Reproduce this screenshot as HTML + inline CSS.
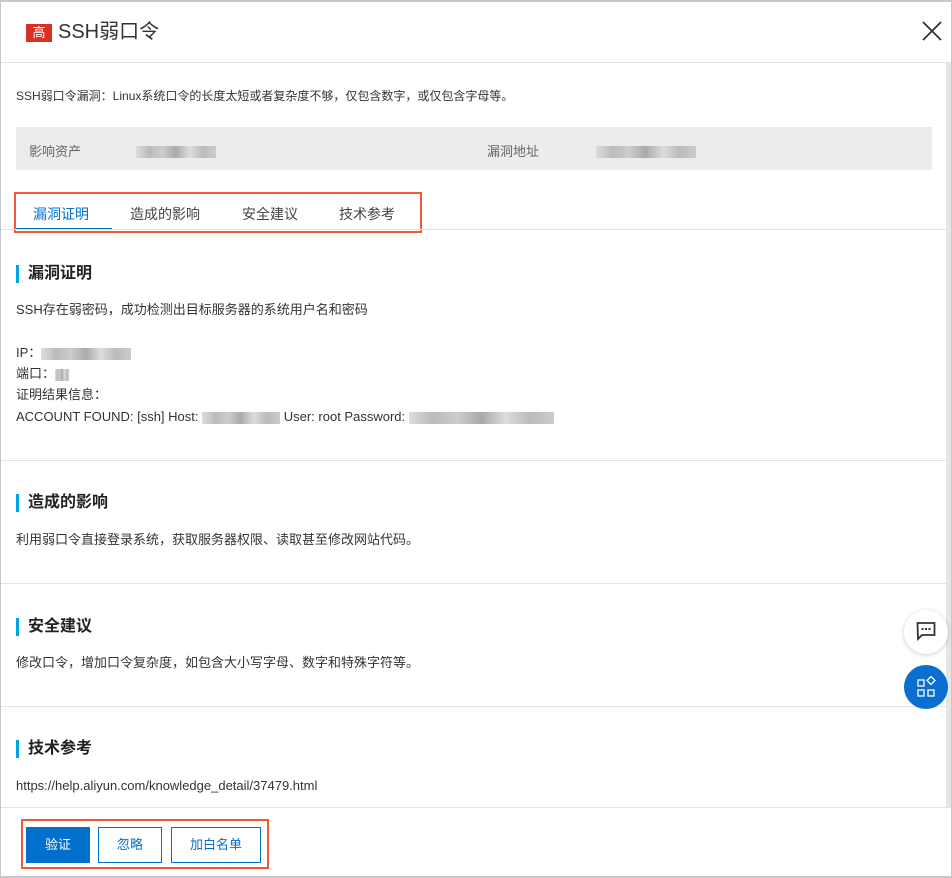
<!DOCTYPE html>
<html><head><meta charset="utf-8"><style>
*{box-sizing:border-box;margin:0;padding:0}
body{width:952px;height:878px;overflow:hidden;background:#fff;font-family:"Liberation Sans","Noto Sans CJK SC",sans-serif;color:#333;position:relative}
.frame{position:absolute;left:0;top:0;width:952px;height:878px;border:1px solid #c8c8c8;border-top:2px solid #c8c8c8;border-bottom:2px solid #c8c8c8}
.abs{position:absolute}
.sb{position:absolute;left:946px;top:62px;width:5px;height:746px;background:#e6e6e6}
.hr{position:absolute;left:1px;width:946px;height:1px;background:#e3e3e3}
.h{position:absolute;left:16px;font-size:16px;font-weight:bold;color:#222;border-left:3px solid #00a2e8;padding-left:9px;line-height:18px}
.t{position:absolute;left:16px;font-size:13px;color:#333;line-height:16px}
.blur{display:inline-block;height:12px;background:linear-gradient(90deg,#ddd,#bbb,#ccc,#aaa,#ddd,#bbb,#ccc);vertical-align:middle}
.btn{position:absolute;top:827px;height:36px;font-size:13px;line-height:34px;text-align:center;border:1px solid #0070cc;color:#0070cc;background:#fff}
</style></head><body>
<div class="frame"></div>
<div class="abs" style="left:26px;top:24px;width:26px;height:18px;background:#d93026;color:#fff;font-size:13px;line-height:18px;text-align:center">高</div>
<div class="abs" style="left:58px;top:18px;font-size:20px;color:#333;line-height:28px">SSH弱口令</div>
<svg class="abs" style="left:921px;top:20px" width="22" height="22"><path d="M2 2L20 20M20 2L2 20" stroke="#333" stroke-width="1.8"/></svg>
<div class="hr" style="top:62px"></div>
<div class="sb"></div>
<div class="t" style="top:88px;font-size:12px">SSH弱口令漏洞：Linux系统口令的长度太短或者复杂度不够，仅包含数字，或仅包含字母等。</div>
<div class="abs" style="left:16px;top:127px;width:916px;height:43px;background:#ebeced"></div>
<div class="abs" style="left:29px;top:141px;font-size:13px;color:#666">影响资产</div>
<div class="abs" style="left:136px;top:143px"><span class="blur" style="width:80px"></span></div>
<div class="abs" style="left:487px;top:141px;font-size:13px;color:#666">漏洞地址</div>
<div class="abs" style="left:596px;top:143px"><span class="blur" style="width:100px"></span></div>
<div class="abs" style="left:14px;top:192px;width:408px;height:41px;border:2px solid #f05a3a"></div>
<div class="abs" style="left:33px;top:204px;font-size:14px;color:#0070cc">漏洞证明</div>
<div class="abs" style="left:16px;top:228px;width:96px;height:2px;background:#0070cc"></div>
<div class="abs" style="left:130px;top:204px;font-size:14px;color:#444">造成的影响</div>
<div class="abs" style="left:242px;top:204px;font-size:14px;color:#444">安全建议</div>
<div class="abs" style="left:339px;top:204px;font-size:14px;color:#444">技术参考</div>
<div class="hr" style="top:229px"></div>
<div class="h" style="top:265px">漏洞证明</div>
<div class="t" style="top:302px">SSH存在弱密码，成功检测出目标服务器的系统用户名和密码</div>
<div class="t" style="top:345px">IP：<span class="blur" style="width:90px"></span></div>
<div class="t" style="top:366px">端口：<span class="blur" style="width:14px"></span></div>
<div class="t" style="top:387px">证明结果信息：</div>
<div class="t" style="top:409px">ACCOUNT FOUND: [ssh] Host: <span class="blur" style="width:78px"></span> User: root Password: <span class="blur" style="width:145px"></span></div>
<div class="hr" style="top:460px"></div>
<div class="h" style="top:494px">造成的影响</div>
<div class="t" style="top:532px">利用弱口令直接登录系统，获取服务器权限、读取甚至修改网站代码。</div>
<div class="hr" style="top:583px"></div>
<div class="h" style="top:618px">安全建议</div>
<div class="t" style="top:655px">修改口令，增加口令复杂度，如包含大小写字母、数字和特殊字符等。</div>
<div class="hr" style="top:706px"></div>
<div class="h" style="top:740px">技术参考</div>
<div class="t" style="top:778px">https://help.aliyun.com/knowledge_detail/37479.html</div>
<div class="hr" style="top:807px"></div>
<div class="abs" style="left:21px;top:819px;width:248px;height:50px;border:2px solid #f05a3a"></div>
<div class="btn" style="left:26px;width:64px;background:#0070cc;color:#fff">验证</div>
<div class="btn" style="left:98px;width:64px">忽略</div>
<div class="btn" style="left:171px;width:90px">加白名单</div>
<div class="abs" style="left:904px;top:610px;width:44px;height:44px;border-radius:50%;background:#fff;box-shadow:0 1px 5px rgba(0,0,0,.2)"></div>
<svg class="abs" style="left:916px;top:621px" width="20" height="20"><path d="M1.5 2H18.5V14H6L2 18Z" fill="none" stroke="#333" stroke-width="1.8"/><rect x="5.5" y="7" width="2" height="2" fill="#333"/><rect x="9" y="7" width="2" height="2" fill="#333"/><rect x="12.5" y="7" width="2" height="2" fill="#333"/></svg>
<div class="abs" style="left:904px;top:665px;width:44px;height:44px;border-radius:50%;background:#0a6fd0"></div>
<svg class="abs" style="left:916px;top:676px" width="22" height="22"><g fill="none" stroke="#fff" stroke-width="1.3"><rect x="2" y="4" width="6" height="6"/><rect x="2" y="14" width="6" height="6"/><rect x="12" y="14" width="6" height="6"/><path d="M15 0.5L19 4.5L15 8.5L11 4.5Z"/></g></svg>
</body></html>
